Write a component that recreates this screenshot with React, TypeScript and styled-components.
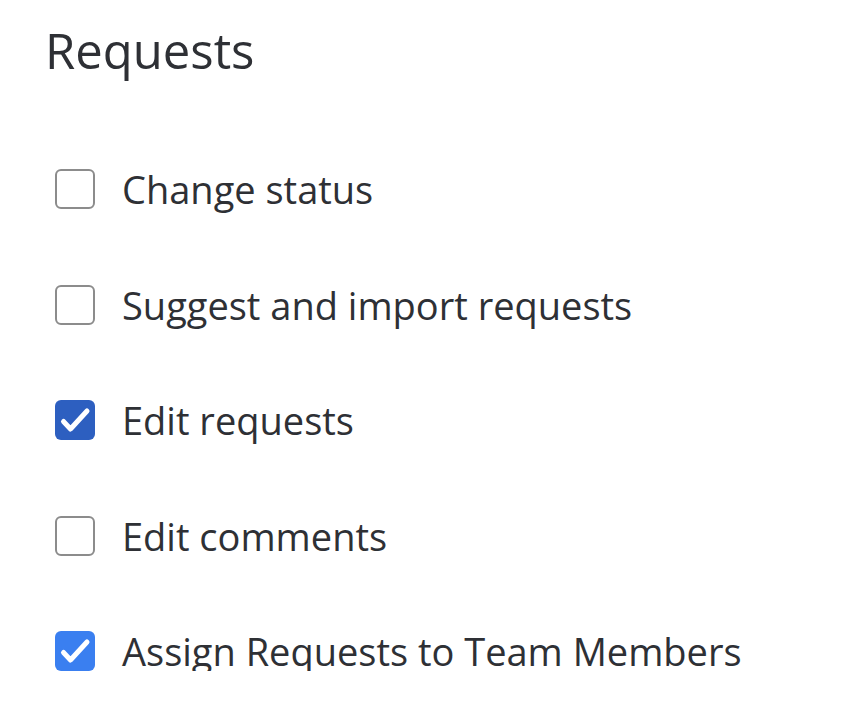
import styled, { createGlobalStyle } from 'styled-components';

const GlobalStyle = createGlobalStyle`
  body {
    margin: 0;
    background: #ffffff;
    font-family: "Open Sans", Lato, sans-serif;
    color: #2e3035;
  }
`;

const Panel = styled.section`
  padding: 18px 0 0 45px;
`;

const Title = styled.h2`
  margin: 0 0 87px;
  font-size: 49px;
  font-weight: 400;
  line-height: 64px;
  color: #2e3035;
`;

const List = styled.div`
  display: flex;
  flex-direction: column;
  gap: 75.5px;
  padding-left: 10px;
`;

const Row = styled.label`
  display: flex;
  align-items: center;
  gap: 27px;
  height: 40px;
  font-size: 38px;
  color: #2e3035;
`;

const Box = styled.span<{ $checked?: boolean; $tone?: string }>`
  flex: none;
  width: 40px;
  height: 40px;
  box-sizing: border-box;
  border-radius: 6px;
  display: flex;
  align-items: center;
  justify-content: center;
  border: ${(p) => (p.$checked ? 'none' : '2.5px solid #8c8c8c')};
  background: ${(p) => (p.$checked ? p.$tone : '#ffffff')};
`;

const Check = () => (
  <svg width="40" height="40" viewBox="0 0 40 40" fill="none">
    <path d="M8.5 21.5l7 7.5L32 11" stroke="#ffffff" strokeWidth="5" strokeLinecap="round" strokeLinejoin="round" />
  </svg>
);

const items = [
  { label: 'Change status', checked: false },
  { label: 'Suggest and import requests', checked: false },
  { label: 'Edit requests', checked: true, tone: '#2d5fc0' },
  { label: 'Edit comments', checked: false },
  { label: 'Assign Requests to Team Members', checked: true, tone: '#3a7ff0' },
];

const App = () => {
  return (
    <>
      <GlobalStyle />
      <Panel>
        <Title>Requests</Title>
        <List>
          {items.map((item) => (
            <Row key={item.label}>
              <Box $checked={item.checked} $tone={item.tone}>
                {item.checked && <Check />}
              </Box>
              <span>{item.label}</span>
            </Row>
          ))}
        </List>
      </Panel>
    </>
  );
};

export default App;
